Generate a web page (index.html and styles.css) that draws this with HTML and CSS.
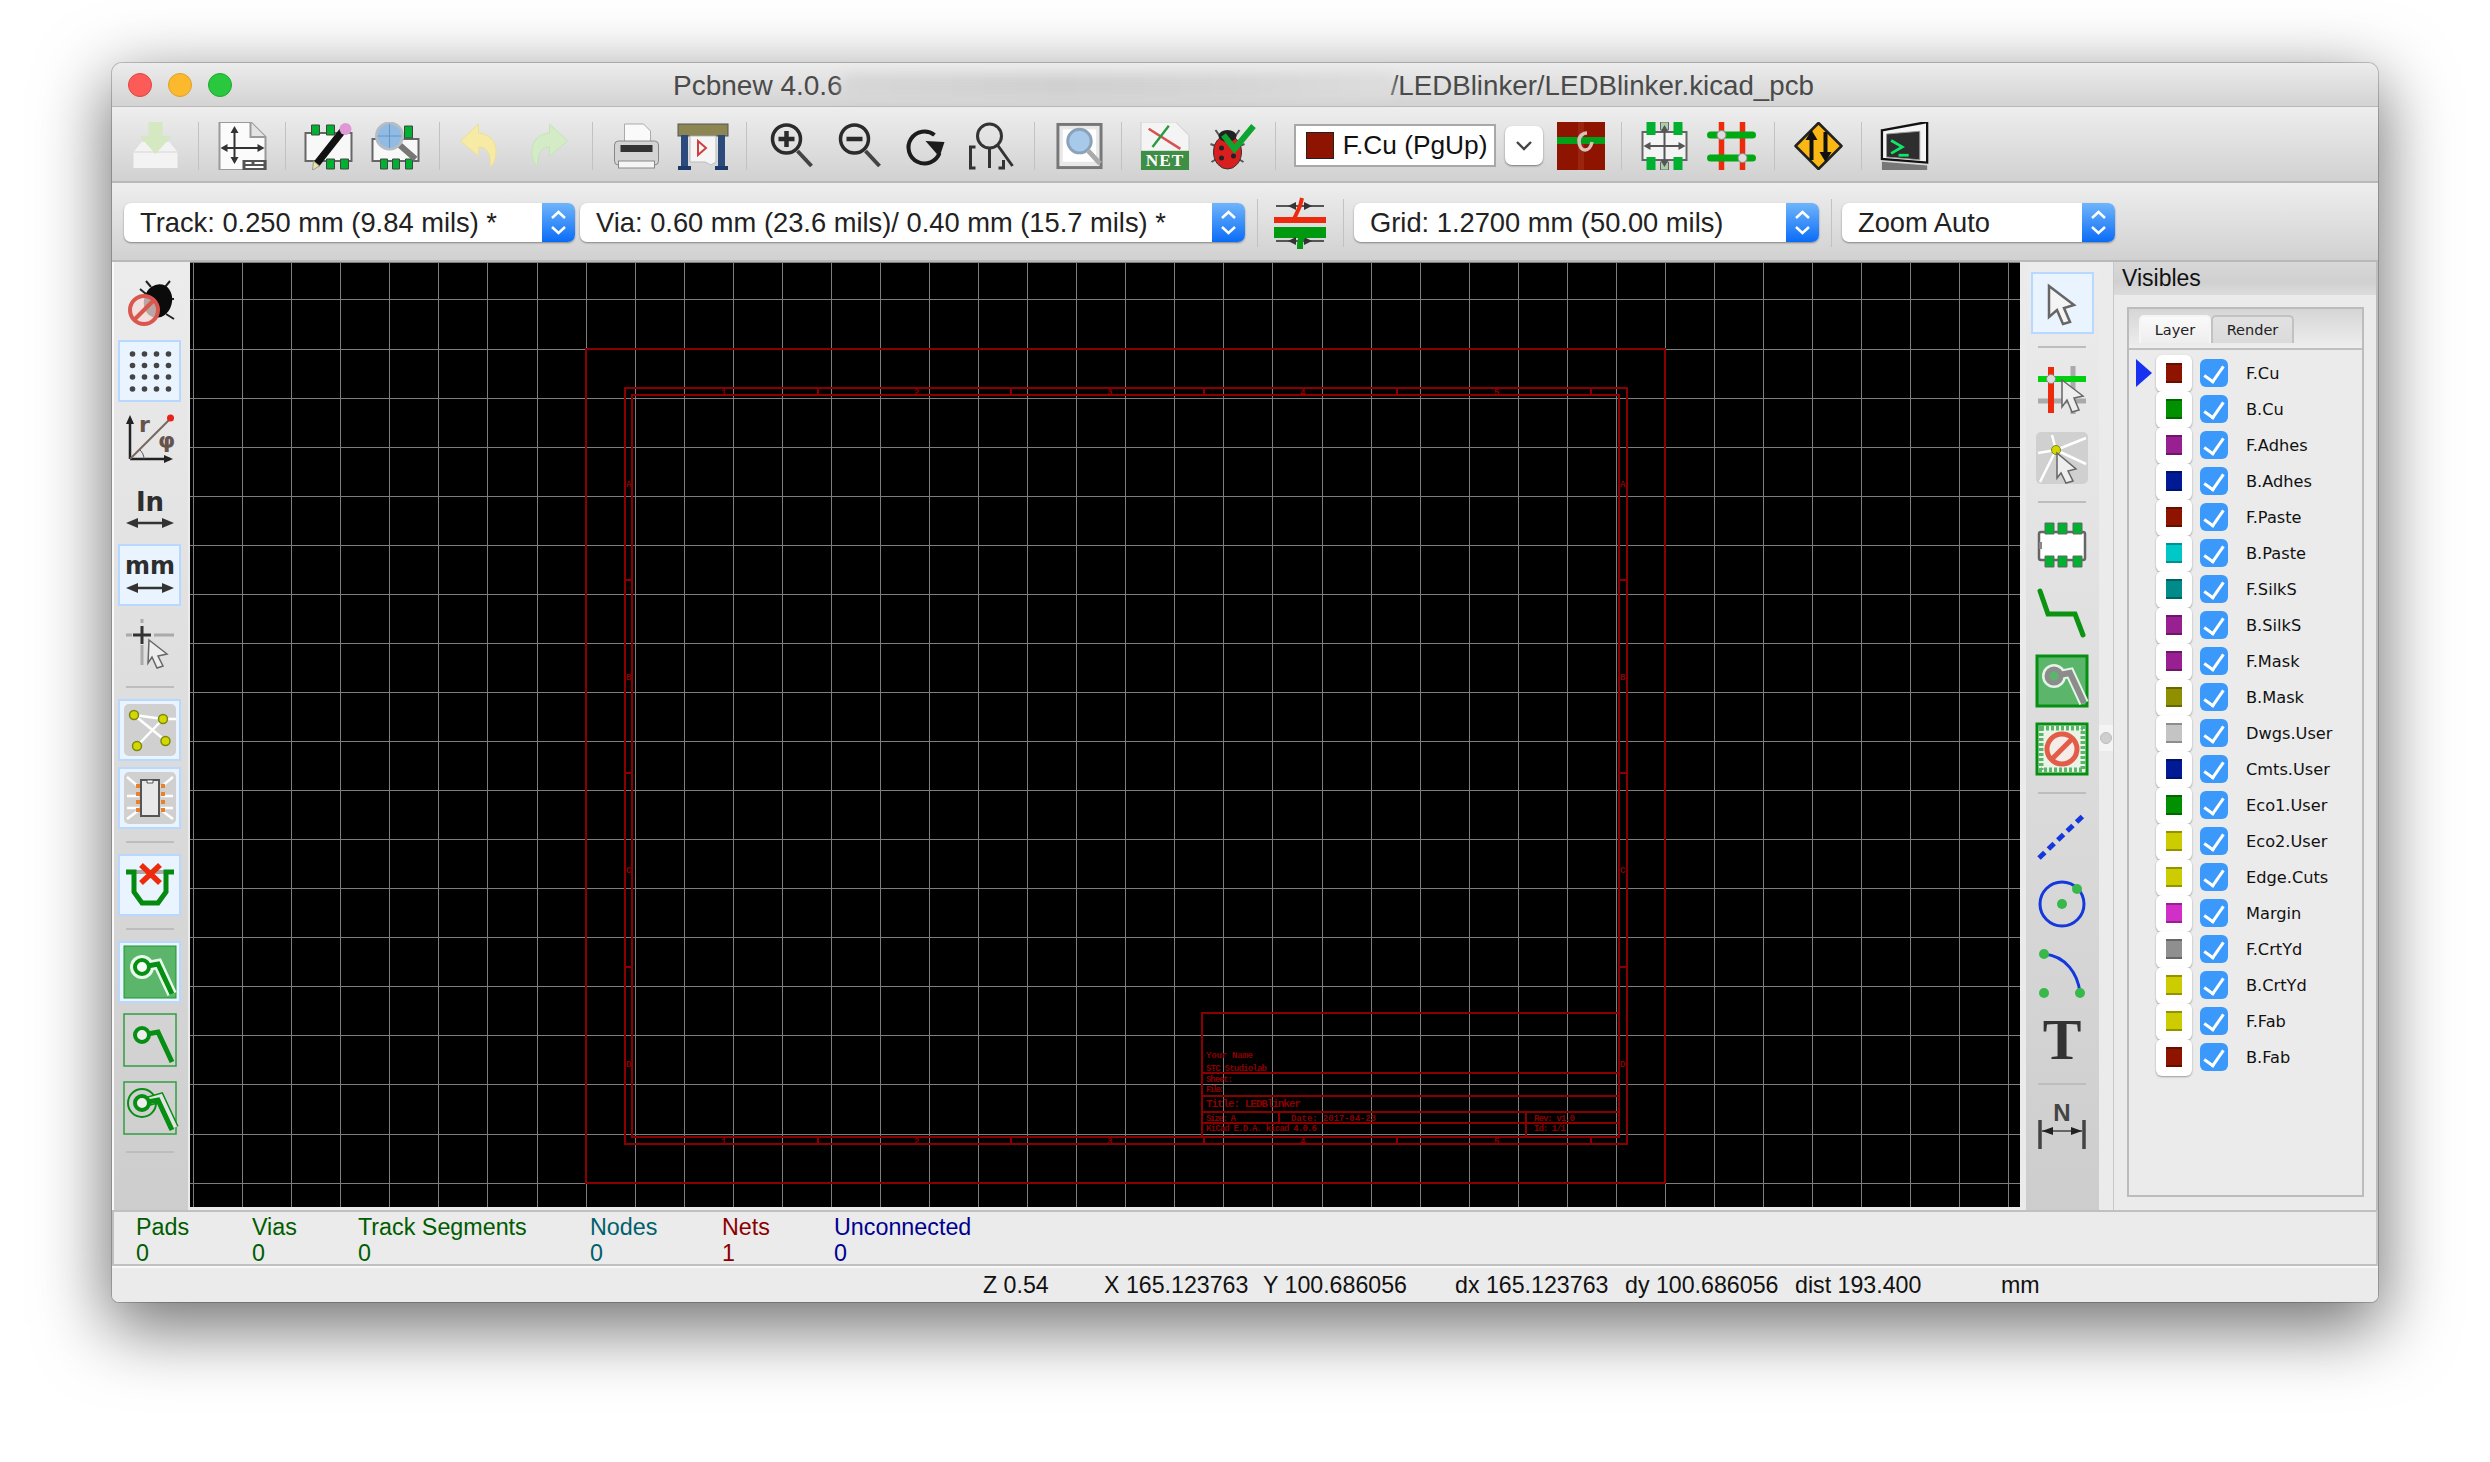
FILE: index.html
```html
<!DOCTYPE html>
<html lang="en">
<head>
<meta charset="utf-8">
<title>Pcbnew 4.0.6</title>
<link rel="stylesheet" href="styles.css">
</head>
<body>
<div class="window">
  <header class="titlebar">
    <div class="lights"><span class="light red"></span><span class="light amber"></span><span class="light green"></span></div>
    <div class="title"><span>Pcbnew 4.0.6</span><span class="redacted"></span><span class="path">/LEDBlinker/LEDBlinker.kicad_pcb</span></div>
  </header>

  <div class="toolbar top-tools">
    <svg class="tool" viewBox="0 0 48 48"><path d="M10 20 2 30v16h44V30l-8-10z" fill="#f3f3f3"/><path d="M2 30h44" stroke="#e4e4e4" stroke-width="2"/><path d="M17 0h14v14h9L24 32 8 14h9z" fill="#d4e8c2"/></svg>
    <i class="vsep"></i>
    <svg class="tool" viewBox="0 0 48 48"><path d="M1 0h31l15 15v33H1z" fill="#fbfbfb" stroke="#9a9a9a" stroke-width="2"/><path d="M32 0v15h15" fill="#e4e4e4" stroke="#9a9a9a" stroke-width="2"/><path d="M16 8v32M5 26h38" stroke="#333" stroke-width="2"/><path d="m16 4 4 7h-8zM16 42l4-7h-8zM2 26l7-4v8zM46 26l-7-4v8z" fill="#333"/><rect x="24" y="38" width="24" height="10" fill="#555"/><path d="M27 41h6M36 41h9M27 45h18" stroke="#fff" stroke-width="2"/></svg>
    <i class="vsep"></i>
    <svg class="tool" viewBox="0 0 48 48"><rect x="1" y="11" width="46" height="28" fill="#f8f8f8" stroke="#666" stroke-width="2"/><path d="M7 3h8v10H7zM22 3h8v10h-8zM22 37h8v10h-8zM36 37h8v10h-8z" fill="#00b030" stroke="#444"/><path d="M38 9 12 42" stroke="#111" stroke-width="7"/><circle cx="41" cy="7" r="6" fill="#e097d6"/><path d="m9 39 6 5-7 4z" fill="#eee29a" stroke="#999"/></svg>
    <svg class="tool" viewBox="0 0 48 48"><rect x="1" y="17" width="46" height="22" fill="#f8f8f8" stroke="#666" stroke-width="2"/><path d="M33 4h8v12h-8zM9 37h7v10H9zM21 37h7v10h-7zM34 37h7v10h-7z" fill="#00b030" stroke="#444"/><path d="m27 22 17 15" stroke="#777" stroke-width="6"/><circle cx="18" cy="14" r="13" fill="#8fbbe4" stroke="#b4bcc4" stroke-width="3"/><path d="M18 2v24M6 14h24" stroke="#6a94bd"/></svg>
    <i class="vsep"></i>
    <svg class="tool" viewBox="4 0 48 48"><path d="M24 2 6 19l18 15V25c10 0 12 8 12 20 8-8 10-32-12-34z" fill="#f6eaa4" stroke="#ece096"/></svg>
    <svg class="tool" viewBox="0 0 48 48"><path d="M24 2 42 19 24 34V25c-10 0-12 8-12 20-8-8-10-32 12-34z" fill="#d3ecc6" stroke="#c4e4b6"/></svg>
    <i class="vsep"></i>
    <svg class="tool" viewBox="0 0 48 48"><path d="M12 2h19l7 7v14H12z" fill="#fafafa" stroke="#aaa"/><rect x="2" y="19" width="44" height="24" rx="4" fill="#d4d4d4" stroke="#888"/><rect x="8" y="23" width="32" height="7" fill="#333"/><rect x="6" y="39" width="36" height="7" fill="#f5f5f5" stroke="#888"/></svg>
    <svg class="tool wide" viewBox="0 0 52 48"><rect x="1" y="2" width="50" height="12" fill="#8c8652" stroke="#555"/><rect x="4" y="13" width="7" height="33" fill="#2c4a7c"/><rect x="41" y="13" width="7" height="33" fill="#2c4a7c"/><rect x="1" y="44" width="13" height="4" fill="#1e3a6a"/><rect x="38" y="44" width="13" height="4" fill="#1e3a6a"/><path d="M13 14h26v26l-5 3-6-3H13z" fill="#f5f5f5" stroke="#bbb"/><path d="m21 19 8 7-8 7z" fill="none" stroke="#d04040" stroke-width="2"/></svg>
    <i class="vsep"></i>
    <svg class="tool" viewBox="-3 0 48 48"><circle cx="18" cy="17" r="14" fill="none" stroke="#2b2b2b" stroke-width="3.5"/><path d="M18 9v16M10 17h16" stroke="#2b2b2b" stroke-width="4.5"/><path d="m29 29 14 15" stroke="#444" stroke-width="4"/></svg>
    <svg class="tool" viewBox="-3 0 48 48"><circle cx="18" cy="17" r="14" fill="none" stroke="#2b2b2b" stroke-width="3.5"/><path d="M10 17h16" stroke="#2b2b2b" stroke-width="4.5"/><path d="m29 29 14 15" stroke="#444" stroke-width="4"/></svg>
    <svg class="tool" viewBox="0 0 48 48"><path d="M34 13a16 16 0 1 0 5 18" fill="none" stroke="#1c1c1c" stroke-width="4"/><path d="m25 19 19 1-5 15z" fill="#1c1c1c"/></svg>
    <svg class="tool" viewBox="0 0 48 48"><circle cx="22" cy="14" r="12" fill="none" stroke="#333" stroke-width="3"/><path d="m30 23 15 21M22 26v20" stroke="#333" stroke-width="3"/><path d="M8 25H3v21h5M31 46h5v-8" fill="none" stroke="#333" stroke-width="3"/></svg>
    <i class="vsep"></i>
    <svg class="tool" viewBox="-2 0 50 48"><rect x="2" y="2" width="44" height="44" fill="#e8e8e8" stroke="#777" stroke-width="3"/><rect x="7" y="7" width="34" height="33" fill="#fff"/><circle cx="24" cy="19" r="12" fill="#a7c9ea" stroke="#8ca2b8" stroke-width="3"/><path d="m33 29 12 13" stroke="#aaa" stroke-width="5"/></svg>
    <i class="vsep"></i>
    <svg class="tool wide" viewBox="0 0 52 50"><path d="M1 0h36l14 14v36H1z" fill="#f4f4f4" stroke="#ccc"/><path d="m9 7 33 21" stroke="#d85050" stroke-width="2.5"/><path d="m30 4-17 22" stroke="#2a9a40" stroke-width="2.5"/><rect x="1" y="30" width="50" height="20" fill="#3f8e46"/><text class="net-text" x="26" y="46" text-anchor="middle">NET</text></svg>
    <svg class="tool" viewBox="0 0 48 48"><path d="M8 8 15 18M32 8l-7 10M3 22l10 4M4 40l10-6M37 22l-10 4M36 40l-10-6" stroke="#555" stroke-width="2"/><ellipse cx="20" cy="30" rx="14" ry="17" fill="#d81e1e" stroke="#333"/><ellipse cx="20" cy="14" rx="9" ry="6" fill="#222"/><circle cx="14" cy="26" r="2.5" fill="#222"/><circle cx="26" cy="34" r="2.5" fill="#222"/><circle cx="14" cy="36" r="2.5" fill="#222"/><path d="M16 13 27 27 46 4" fill="none" stroke="#0da52f" stroke-width="6"/></svg>
    <i class="vsep"></i>
    <div class="layer-select"><i class="layer-chip"></i><span>F.Cu (PgUp)</span></div>
    <div class="layer-arrow"><svg width="18" height="12" viewBox="0 0 18 12"><path d="m2 2 7 7 7-7" fill="none" stroke="#444" stroke-width="2.4"/></svg></div>
    <svg class="tool via-icon" viewBox="0 0 48 48"><rect width="48" height="48" fill="#8f1400"/><rect x="21" width="6" height="48" fill="#9a2410"/><rect y="15" width="48" height="7" fill="#00a018"/><path d="M30 11c-3 0-8 2-8 8s3 9 6 9 6-3 7-8" fill="none" stroke="#d8c0bc" stroke-width="3.5"/></svg>
    <i class="vsep"></i>
    <svg class="tool" viewBox="0 0 48 48"><path d="M2 10h44v28H2z" fill="#f4f4f4" stroke="#666" stroke-width="2"/><path d="M6 0h9v13H6zM33 0h9v13h-9zM6 35h9v13H6zM33 35h9v13h-9z" fill="#00b030"/><path d="M20 0h8v8h-8zM20 40h8v8h-8z" fill="#a8cda8" stroke="#666"/><path d="M5 24h38M24 5v38" stroke="#555" stroke-width="2"/><path d="m3 24 7-4v8zM45 24l-7-4v8zM24 3l-4 7h8zM24 45l-4-7h8z" fill="#555"/></svg>
    <svg class="tool" viewBox="0 0 48 48"><path d="M14 0v48M35 0v48" stroke="#ee2a0c" stroke-width="5.5"/><path d="M3 13h42M3 36h42" stroke="#00a814" stroke-width="7" stroke-linecap="round"/><circle cx="14" cy="13" r="4.500" fill="#ddd" stroke="#888"/><circle cx="35" cy="36" r="4.500" fill="#ddd" stroke="#888"/></svg>
    <i class="vsep"></i>
    <svg class="tool" viewBox="0 0 48 48"><path d="m24 1 23 23-23 23L1 24z" fill="#fbb714" stroke="#222" stroke-width="2.5" stroke-linejoin="round"/><path d="M17 38V16M31 10v22" stroke="#111" stroke-width="4"/><path d="m17 8 6 10H11zM31 40l6-10H25z" fill="#111"/></svg>
    <i class="vsep"></i>
    <svg class="tool wide" viewBox="0 0 52 52"><path d="M1 9 50 0v44L1 40z" fill="#f4f4f4" stroke="#111" stroke-width="2.5"/><path d="M6 13 42 10v31L6 38z" fill="#2e2e2e" stroke="#999"/><path d="m11 20 12 7-12 7" fill="none" stroke="#0ee66a" stroke-width="3"/><path d="M19 36h11" stroke="#0ee66a" stroke-width="3"/><path d="M1 43 50 47v5H1z" fill="#777"/></svg>
  </div>

  <div class="toolbar select-tools">
    <div class="combo track"><span>Track: 0.250 mm (9.84 mils) *</span><svg class="stepper" viewBox="0 0 33 39"><path d="m10 15 6.500-6 6.500 6M10 24l6.500 6 6.500-6" fill="none" stroke="#fff" stroke-width="2.500"/></svg></div>
    <div class="combo via"><span>Via: 0.60 mm (23.6 mils)/ 0.40 mm (15.7 mils) *</span><svg class="stepper" viewBox="0 0 33 39"><path d="m10 15 6.500-6 6.500 6M10 24l6.500 6 6.500-6" fill="none" stroke="#fff" stroke-width="2.500"/></svg></div>
    <i class="vsep tall"></i>
    <svg class="auto-width" viewBox="0 0 52 52"><path d="M2 9h48M2 44h48" fill="none" stroke="#555" stroke-width="2"/><path d="m14 9 8-4v8zM38 9l-8-4v8z" fill="#333"/><path d="M28 1 26 9 20 22" fill="none" stroke="#ee2a0c" stroke-width="4"/><rect y="20" width="52" height="6" fill="#ee2a0c"/><rect y="30" width="52" height="11" fill="#009a10"/><path d="m14 44 8-4v8zM38 44l-8-4v8z" fill="#333"/><path d="M32 37c-6 3-6 7-6 15" fill="none" stroke="#009a10" stroke-width="6"/></svg>
    <i class="vsep tall after-icon"></i>
    <div class="combo grid"><span>Grid: 1.2700 mm (50.00 mils)</span><svg class="stepper" viewBox="0 0 33 39"><path d="m10 15 6.500-6 6.500 6M10 24l6.500 6 6.500-6" fill="none" stroke="#fff" stroke-width="2.500"/></svg></div>
    <i class="vsep tall"></i>
    <div class="combo zoom"><span>Zoom Auto</span><svg class="stepper" viewBox="0 0 33 39"><path d="m10 15 6.500-6 6.500 6M10 24l6.500 6 6.500-6" fill="none" stroke="#fff" stroke-width="2.500"/></svg></div>
  </div>

  <div class="workspace">
    <aside class="vbar left-bar">
      <div class="vtool"><svg viewBox="0 0 48 48"><path d="M20 2l5 6M44 2l-5 6M48 20h-6M48 40l-8-5M14 10l6 5" stroke="#222" stroke-width="2"/><ellipse cx="32" cy="22" rx="14" ry="17" fill="#0b0b0b" transform="rotate(15 32 22)"/><circle cx="18" cy="31" r="14" fill="#f3dcd8" fill-opacity=".75" stroke="#d9574e" stroke-width="4"/><path d="m9 40 18-18" stroke="#d9574e" stroke-width="4"/></svg></div>
      <div class="vtool on"><svg viewBox="0 0 48 48"><g fill="#444"><circle cx="6.500" cy="7" r="2.800"/><circle cx="18.500" cy="7" r="2.800"/><circle cx="30.500" cy="7" r="2.800"/><circle cx="42.500" cy="7" r="2.800"/><circle cx="6.500" cy="18.500" r="2.800"/><circle cx="18.500" cy="18.500" r="2.800"/><circle cx="30.500" cy="18.500" r="2.800"/><circle cx="42.500" cy="18.500" r="2.800"/><circle cx="6.500" cy="30" r="2.800"/><circle cx="18.500" cy="30" r="2.800"/><circle cx="30.500" cy="30" r="2.800"/><circle cx="42.500" cy="30" r="2.800"/><circle cx="6.500" cy="42" r="2.800"/><circle cx="18.500" cy="42" r="2.800"/><circle cx="30.500" cy="42" r="2.800"/><circle cx="42.500" cy="42" r="2.800"/></g></svg></div>
      <div class="vtool"><svg viewBox="0 0 48 48"><path d="M4 44V4M4 44h40" fill="none" stroke="#222" stroke-width="2.500"/><path d="m4 0 4 9H0zM47 44l-9-4v8z" fill="#222"/><path d="M4 44 44 4" stroke="#7a6660" stroke-width="2"/><circle cx="44.500" cy="3" r="3.500" fill="#e8221a"/><text class="polar-r" x="13" y="17">r</text><text class="polar-phi" x="32" y="33">φ</text><path d="M18 44c0-4-2-7-4-9" fill="none" stroke="#555"/></svg></div>
      <div class="vtool"><svg viewBox="0 0 48 48"><text class="unit-in" x="24" y="28" text-anchor="middle">In</text><path d="M6 40h36" stroke="#333" stroke-width="2.500"/><path d="m0 40 12-5v10zM48 40l-12-5v10z" fill="#333"/></svg></div>
      <div class="vtool on"><svg viewBox="0 0 48 48"><text class="unit-mm" x="24" y="23" text-anchor="middle">mm</text><path d="M6 37h36" stroke="#333" stroke-width="2.500"/><path d="m0 37 12-5v10zM48 37l-12-5v10z" fill="#333"/></svg></div>
      <div class="vtool"><svg viewBox="0 0 48 48"><path d="M0 16h6M28 16h20M16 0v4M16 26v20" stroke="#aaa" stroke-width="3"/><path d="M16 7v18M7 16h18" stroke="#333" stroke-width="3"/><path d="m23 21 18 14-9 2 5 10-6 2-5-11-4 6z" fill="#eee" stroke="#666" stroke-width="1.500"/></svg></div>
      <i class="hsep"></i>
      <div class="vtool on"><svg viewBox="0 0 48 48"><rect x="-2" y="-2" width="52" height="52" rx="5" fill="#d0d0d0"/><path d="m8 9 32 26M37 13 11 40M8 9l29 4M37 13h13" stroke="#fff" stroke-width="2.500"/><g fill="#d6d600" stroke="#7a8a10" stroke-width="1.500"><circle cx="8" cy="9" r="4.500"/><circle cx="37" cy="13" r="4.500"/><circle cx="11" cy="40" r="4.500"/><circle cx="39.500" cy="35" r="4.500"/></g></svg></div>
      <div class="vtool on"><svg viewBox="0 0 48 48"><rect x="-2" y="-2" width="52" height="52" rx="5" fill="#d0d0d0"/><path d="M1 3l12 10M47 3 35 13M1 22h12M47 22H35M1 34h12M47 34H35M1 45l12-9M47 45l-12-9" stroke="#fff" stroke-width="2.500"/><rect x="15" y="6" width="18" height="36" fill="#e8e8e8" stroke="#555" stroke-width="2"/><path d="M21 6h6v3h-6z" fill="#fff" stroke="#555"/><g fill="#e8822a"><rect x="10" y="10" width="4" height="4"/><rect x="10" y="18" width="4" height="4"/><rect x="10" y="26" width="4" height="4"/><rect x="10" y="34" width="4" height="4"/><rect x="35" y="10" width="4" height="4"/><rect x="35" y="18" width="4" height="4"/><rect x="35" y="26" width="4" height="4"/><rect x="35" y="34" width="4" height="4"/></g></svg></div>
      <i class="hsep"></i>
      <div class="vtool on"><svg viewBox="0 0 48 48"><path d="M2 11h44" stroke="#aaa" stroke-width="4"/><path d="M0 11h8v20l8 11h16l8-11V11h8" fill="none" stroke="#058a10" stroke-width="5"/><path d="m15 4 19 18M34 4 15 22" stroke="#ee2a0c" stroke-width="5.500"/></svg></div>
      <i class="hsep"></i>
      <div class="vtool on"><svg viewBox="0 0 48 48"><rect x="-2" y="-2" width="52" height="52" fill="#5bb56b" stroke="#1a9a2a" stroke-width="1"/><path d="M16 19 32 16l14 30" fill="none" stroke="#e8f8ea" stroke-width="10"/><circle cx="16" cy="19" r="12" fill="#e8f8ea"/><path d="M16 19 32 16l14 30" fill="none" stroke="#068f12" stroke-width="5"/><circle cx="16" cy="19" r="7" fill="#f6fbf6" stroke="#068f12" stroke-width="4"/></svg></div>
      <div class="vtool"><svg viewBox="0 0 48 48"><rect x="-2" y="-2" width="52" height="52" fill="none" stroke="#2f9f40" stroke-width="1.500"/><path d="M16 19 32 16l14 30" fill="none" stroke="#068f12" stroke-width="5"/><circle cx="16" cy="19" r="7" fill="#eee" stroke="#068f12" stroke-width="4"/></svg></div>
      <div class="vtool"><svg viewBox="0 0 48 48"><rect x="-2" y="-2" width="52" height="52" fill="none" stroke="#2f9f40" stroke-width="1.500"/><path d="M16 19 34 14l14 30" fill="none" stroke="#068f12" stroke-width="10"/><circle cx="16" cy="19" r="14" fill="none" stroke="#068f12" stroke-width="2"/><path d="M16 19 34 14l14 30" fill="none" stroke="#e4e4e4" stroke-width="7"/><path d="M16 19 32 16l14 30" fill="none" stroke="#068f12" stroke-width="5"/><circle cx="16" cy="19" r="7" fill="#eee" stroke="#068f12" stroke-width="4"/></svg></div>
      <i class="hsep"></i>
    </aside>

    <main class="canvas">
      <svg class="board" viewBox="0 0 1830 945" width="1830" height="945">
        <rect width="1830" height="945" fill="#000"/>
        <path class="grid-lines" d="M3.500 0V945M52.500 0V945M101.500 0V945M150.500 0V945M199.500 0V945M248.500 0V945M297.500 0V945M347.500 0V945M396.500 0V945M445.500 0V945M494.500 0V945M543.500 0V945M592.500 0V945M641.500 0V945M690.500 0V945M739.500 0V945M788.500 0V945M837.500 0V945M886.500 0V945M935.500 0V945M984.500 0V945M1033.500 0V945M1082.500 0V945M1132.500 0V945M1181.500 0V945M1230.500 0V945M1279.500 0V945M1328.500 0V945M1377.500 0V945M1426.500 0V945M1475.500 0V945M1524.500 0V945M1573.500 0V945M1622.500 0V945M1671.500 0V945M1720.500 0V945M1769.500 0V945M1818.500 0V945M0 .500H1830M0 37.500H1830M0 87.500H1830M0 136.500H1830M0 185.500H1830M0 234.500H1830M0 283.500H1830M0 332.500H1830M0 381.500H1830M0 430.500H1830M0 479.500H1830M0 528.500H1830M0 577.500H1830M0 626.500H1830M0 675.500H1830M0 724.500H1830M0 773.500H1830M0 822.500H1830M0 872.500H1830M0 921.500H1830"/>
        <g class="frame">
          <rect x="396" y="87" width="1079" height="834"/>
          <rect x="435" y="126" width="1002" height="756"/>
          <rect x="442" y="133" width="987" height="742"/>
          <path d="M1012 875V751H1429M1012 811H1429M1012 834H1429M1012 850H1429M1012 861H1429M1089 850V861M1336 850V875"/>
          <path d="M628 126v7M821 126v7M1014 126v7M1207 126v7M1401 126v7M628 875v7M821 875v7M1014 875v7M1207 875v7M1401 875v7M435 318h7M435 511h7M435 705h7M1429 318h8M1429 511h8M1429 705h8"/>
        </g>
        <g class="sheet-text">
          <text x="531" y="133">1</text><text x="724" y="133">2</text><text x="917" y="133">3</text><text x="1110" y="133">4</text><text x="1304" y="133">5</text>
          <text x="531" y="882">1</text><text x="724" y="882">2</text><text x="917" y="882">3</text><text x="1110" y="882">4</text><text x="1304" y="882">5</text>
          <text x="436" y="225">A</text><text x="436" y="418">B</text><text x="436" y="611">C</text><text x="436" y="805">D</text>
          <text x="1430" y="225">A</text><text x="1430" y="418">B</text><text x="1430" y="611">C</text><text x="1430" y="805">D</text>
          <text x="1016" y="796" textLength="47">Your Name</text>
          <text x="1016" y="809" textLength="61">STC Studiolab</text>
          <text x="1016" y="820" textLength="27">Sheet:</text>
          <text x="1016" y="830" textLength="18">File:</text>
          <text class="sheet-title" x="1016" y="845" textLength="95">Title: LEDBlinker</text>
          <text x="1016" y="859" textLength="30">Size: A</text>
          <text x="1101" y="859" textLength="85">Date: 2017-04-23</text>
          <text x="1344" y="859" textLength="41">Rev: v1.0</text>
          <text x="1016" y="869" textLength="111">KiCad E.D.A. kicad 4.0.6</text>
          <text x="1344" y="869" textLength="32">Id: 1/1</text>
        </g>
      </svg>
    </main>

    <aside class="vbar right-bar">
      <div class="vtool on"><svg viewBox="0 0 48 48"><path d="m11 7 25 19-10 3 6 14-7 2-6-14-8 7z" fill="#f4f4f4" stroke="#666" stroke-width="2.500"/></svg></div>
      <i class="hsep"></i>
      <div class="vtool"><svg viewBox="0 0 48 48"><path d="M35 0v48M0 35h48" stroke="#aaa" stroke-width="5"/><path d="M13 1v46" stroke="#ee2a0c" stroke-width="6"/><path d="M0 13h48" stroke="#00d010" stroke-width="6"/><circle cx="13" cy="13" r="4.500" fill="#ddd" stroke="#888"/><path d="m24 14 21 16-9 2 5 12-7 2-5-12-5 7z" fill="#eee" stroke="#666" stroke-width="1.500"/></svg></div>
      <div class="vtool"><svg viewBox="0 0 48 48"><rect x="-2" y="-2" width="52" height="52" rx="5" fill="#d0d0d0"/><path d="M18 16 14 1M18 16 48 4M18 16 0 19M18 16 2 48M18 16l30 14" stroke="#fff" stroke-width="2.500"/><circle cx="18" cy="16" r="4.500" fill="#d6d600" stroke="#7a8a10"/><path d="m19 19 19 16-8 2 5 10-7 2-5-10-4 5z" fill="#eee" stroke="#666" stroke-width="1.500"/></svg></div>
      <i class="hsep"></i>
      <div class="vtool"><svg viewBox="0 0 48 48"><rect x="1" y="11" width="46" height="28" rx="2" fill="#fff" stroke="#666" stroke-width="2.500"/><path d="M7 2h9v11H7zM20 2h9v11h-9zM35 2h9v11h-9zM7 35h9v11H7zM20 35h9v11h-9zM35 35h9v11h-9z" fill="#00b030" stroke="#666"/><path d="M1 21h3v7H1z" fill="#888"/></svg></div>
      <div class="vtool"><svg viewBox="0 0 48 48"><path d="m2 2 8 23h27l8 21" fill="none" stroke="#0a9410" stroke-width="5" stroke-linecap="round"/></svg></div>
      <div class="vtool"><svg viewBox="0 0 48 48"><rect x="-1" y="-1" width="50" height="50" fill="#5bb56b" stroke="#068f12" stroke-width="3"/><path d="M16 19 32 16l14 30" fill="none" stroke="#e4f4e6" stroke-width="10"/><circle cx="16" cy="19" r="12" fill="#e4f4e6"/><path d="M16 19 32 16l14 30" fill="none" stroke="#8c8c8c" stroke-width="6"/><circle cx="16" cy="19" r="7" fill="#5bb56b" stroke="#8c8c8c" stroke-width="5"/></svg></div>
      <div class="vtool"><svg viewBox="0 0 48 48"><rect x="-1" y="-1" width="50" height="50" fill="#eaf4e6" stroke="#068f12" stroke-width="3"/><rect x="3" y="3" width="42" height="42" fill="none" stroke="#5bb56b" stroke-width="5" stroke-dasharray="3 2"/><circle cx="24" cy="24" r="15" fill="#f5ece8" stroke="#e25c48" stroke-width="5"/><path d="m13 35 22-22" stroke="#e25c48" stroke-width="5"/></svg></div>
      <i class="hsep"></i>
      <div class="vtool"><svg viewBox="0 0 48 48"><path d="M1 46 47 2" stroke="#1438dc" stroke-width="5" stroke-dasharray="8 5"/></svg></div>
      <div class="vtool"><svg viewBox="0 0 48 48"><circle cx="24" cy="24" r="22" fill="none" stroke="#1438dc" stroke-width="3"/><circle cx="24" cy="24" r="5" fill="#38b84a"/><circle cx="39" cy="9" r="5" fill="#38b84a"/></svg></div>
      <div class="vtool"><svg viewBox="0 0 48 48"><path d="M6 6c22 2 34 20 36 39" fill="none" stroke="#1438dc" stroke-width="3"/><circle cx="6" cy="6" r="5" fill="#38b84a"/><circle cx="6" cy="45" r="5" fill="#38b84a"/><circle cx="42" cy="45" r="5" fill="#38b84a"/></svg></div>
      <div class="vtool"><svg viewBox="0 0 48 48"><text class="tool-t" x="24" y="43" text-anchor="middle">T</text></svg></div>
      <i class="hsep"></i>
      <div class="vtool"><svg viewBox="0 0 48 48"><text class="tool-n" x="24" y="18" text-anchor="middle">N</text><path d="M2 17v29M46 17v29" stroke="#444" stroke-width="3.500"/><path d="M4 28h40" stroke="#444" stroke-width="1.500"/><path d="m4 28 11-4v8zM44 28l-11-4v8z" fill="#222"/></svg></div>
    </aside>

    <div class="sash"><span class="sash-grip"><i></i></span></div>

    <aside class="visibles">
      <h2 class="caption">Visibles</h2>
      <div class="notebook">
        <div class="tabs"><span class="tab active">Layer</span><span class="tab">Render</span></div>
        <div class="layers">
          <div class="row current"><span class="swatch"><i class="c-red"></i></span><span class="check"></span><span class="name">F.Cu</span></div>
          <div class="row"><span class="swatch"><i class="c-green"></i></span><span class="check"></span><span class="name">B.Cu</span></div>
          <div class="row"><span class="swatch"><i class="c-purple"></i></span><span class="check"></span><span class="name">F.Adhes</span></div>
          <div class="row"><span class="swatch"><i class="c-navy"></i></span><span class="check"></span><span class="name">B.Adhes</span></div>
          <div class="row"><span class="swatch"><i class="c-red"></i></span><span class="check"></span><span class="name">F.Paste</span></div>
          <div class="row"><span class="swatch"><i class="c-cyan"></i></span><span class="check"></span><span class="name">B.Paste</span></div>
          <div class="row"><span class="swatch"><i class="c-teal"></i></span><span class="check"></span><span class="name">F.SilkS</span></div>
          <div class="row"><span class="swatch"><i class="c-purple"></i></span><span class="check"></span><span class="name">B.SilkS</span></div>
          <div class="row"><span class="swatch"><i class="c-purple"></i></span><span class="check"></span><span class="name">F.Mask</span></div>
          <div class="row"><span class="swatch"><i class="c-olive"></i></span><span class="check"></span><span class="name">B.Mask</span></div>
          <div class="row"><span class="swatch"><i class="c-silver"></i></span><span class="check"></span><span class="name">Dwgs.User</span></div>
          <div class="row"><span class="swatch"><i class="c-navy"></i></span><span class="check"></span><span class="name">Cmts.User</span></div>
          <div class="row"><span class="swatch"><i class="c-green"></i></span><span class="check"></span><span class="name">Eco1.User</span></div>
          <div class="row"><span class="swatch"><i class="c-yellow"></i></span><span class="check"></span><span class="name">Eco2.User</span></div>
          <div class="row"><span class="swatch"><i class="c-yellow"></i></span><span class="check"></span><span class="name">Edge.Cuts</span></div>
          <div class="row"><span class="swatch"><i class="c-magenta"></i></span><span class="check"></span><span class="name">Margin</span></div>
          <div class="row"><span class="swatch"><i class="c-gray"></i></span><span class="check"></span><span class="name">F.CrtYd</span></div>
          <div class="row"><span class="swatch"><i class="c-yellow"></i></span><span class="check"></span><span class="name">B.CrtYd</span></div>
          <div class="row"><span class="swatch"><i class="c-yellow"></i></span><span class="check"></span><span class="name">F.Fab</span></div>
          <div class="row"><span class="swatch"><i class="c-red"></i></span><span class="check"></span><span class="name">B.Fab</span></div>
        </div>
      </div>
    </aside>
  </div>

  <section class="info">
    <div class="info-item t-green"><span>Pads</span><span>0</span></div>
    <div class="info-item t-green"><span>Vias</span><span>0</span></div>
    <div class="info-item t-green"><span>Track Segments</span><span>0</span></div>
    <div class="info-item t-teal"><span>Nodes</span><span>0</span></div>
    <div class="info-item t-red"><span>Nets</span><span>1</span></div>
    <div class="info-item t-blue"><span>Unconnected</span><span>0</span></div>
  </section>

  <footer class="status">
    <span>Z 0.54</span><span>X 165.123763</span><span>Y 100.686056</span><span>dx 165.123763</span><span>dy 100.686056</span><span>dist 193.400</span><span>mm</span>
  </footer>
</div>
</body>
</html>
```
FILE: styles.css
```css
* { box-sizing: border-box; }
html, body { margin: 0; padding: 0; background: #fff; }
body { width: 2490px; height: 1462px; overflow: hidden; font-family: "Liberation Sans", Arial, sans-serif; }

.window {
  width: 2266px;
  height: 1239px;
  margin: 63px 0 0 112px;
  display: flex;
  flex-direction: column;
  border-radius: 10px 10px 7px 7px;
  background: #ebebeb;
  box-shadow: 0 22px 70px 4px rgba(0, 0, 0, .56), 0 0 0 1px rgba(0, 0, 0, .2);
}

/* title bar */
.titlebar {
  height: 44px;
  flex: none;
  display: flex;
  align-items: center;
  padding-left: 16px;
  background: linear-gradient(#ececec, #d3d3d3);
  border-radius: 10px 10px 0 0;
  border-bottom: 1px solid #b8b8b8;
}
.lights { display: flex; gap: 16px; }
.light { width: 24px; height: 24px; border-radius: 50%; }
.light.red { background: #fc5b57; border: 1px solid #e0443e; }
.light.amber { background: #fdb92e; border: 1px solid #dea123; }
.light.green { background: #29c83f; border: 1px solid #1aab29; }
.title { display: flex; align-items: center; margin: 2px 0 0 441px; font-size: 28px; color: #4a4a4a; white-space: nowrap; }
.title .path { font-size: 27.7px; }
.redacted { width: 548px; height: 22px; background: linear-gradient(90deg, #d6d6d6, #cfcfcf 40%, #d4d4d4 70%, #dcdcdc); filter: blur(6px); }

/* toolbars */
.toolbar {
  height: 76px;
  flex: none;
  display: flex;
  align-items: center;
  background: linear-gradient(#eeeeee, #d1d1d1);
  border-bottom: 2px solid #b9b9b9;
}
.top-tools { gap: 18.25px; padding: 3px 0 0 19px; }
.tool { width: 49px; height: 48px; flex: none; }
.tool.wide { width: 52px; margin-inline: -1.5px; }
.vsep { width: 1px; height: 48px; flex: none; background: #c2c2c2; }
.vsep.tall { margin-inline: 12px 16px; }
.vsep.tall.after-icon { margin-inline: 17px 15px; }
.layer-select {
  width: 202px;
  height: 43px;
  flex: none;
  display: flex;
  align-items: center;
  gap: 9px;
  padding-left: 10px;
  background: #fff;
  border: 2px solid #a8a8a8;
  font-size: 26.3px;
  color: #111;
  white-space: nowrap;
}
.layer-chip { width: 28px; height: 27px; flex: none; background: #8f1400; border: 1px solid #222; }
.layer-arrow {
  width: 38px;
  height: 39px;
  flex: none;
  margin-left: -9px;
  display: flex;
  align-items: center;
  justify-content: center;
  background: #fff;
  border-radius: 7px;
  box-shadow: 0 1px 2px rgba(0, 0, 0, .45);
}
.via-icon { margin: 0 -3px 0 -4px; width: 48px; }

.select-tools { padding: 2px 0 0 12px; height: 79px; gap: 0; }
.combo {
  height: 39px;
  flex: none;
  display: flex;
  align-items: center;
  justify-content: space-between;
  padding-left: 16px;
  background: #fff;
  border-radius: 7px;
  box-shadow: 0 1px 2px rgba(0, 0, 0, .4);
  font-size: 27.3px;
  color: #222;
  white-space: nowrap;
  overflow: hidden;
}
.combo.track { width: 451px; margin-right: 5px; }
.combo.via { width: 665px; }
.combo.grid { width: 465px; margin-left: -5px; }
.combo.zoom { width: 273px; margin-left: -6px; }
.stepper { width: 33px; height: 39px; flex: none; background: linear-gradient(#70b5fb, #0a6cf7); }
.auto-width { width: 52px; height: 52px; flex: none; }

/* workspace */
.workspace { height: 948px; flex: none; display: flex; background: #ebebeb; }
.vbar {
  flex: none;
  display: flex;
  flex-direction: column;
  align-items: center;
  gap: 6px;
  padding-top: 10px;
  background: linear-gradient(#ececec, #cdcdcd);
}
.left-bar { width: 76px; border-left: 2px solid #fafafa; margin-right: 2px; padding-right: 3px; }
.right-bar { width: 73px; margin-left: 6px; padding-right: 1px; }
.vtool {
  width: 63px;
  height: 62px;
  flex: none;
  display: flex;
  align-items: center;
  justify-content: center;
  border: 2px solid transparent;
}
.vtool svg { width: 48px; height: 48px; overflow: visible; }
.vtool.on { background: #eaf4ff; border-color: #b8d8ff; }
.hsep { width: 48px; height: 2px; flex: none; margin-block: 5.5px; background: #bdbdbd; }

.canvas { width: 1830px; height: 945px; flex: none; line-height: 0; }
.board { display: block; }
.grid-lines { stroke: #7e7e7e; stroke-width: 1; fill: none; shape-rendering: crispEdges; }
.frame rect, .frame path { fill: none; stroke: #8a0000; stroke-width: 2; }
.sheet-text text { fill: #8a0000; font-family: "Liberation Mono", monospace; font-size: 9px; font-weight: 700; }
.sheet-text .sheet-title { font-size: 11px; }

/* icon text */
.net-text { fill: #fff; font-family: "Liberation Serif", serif; font-weight: 700; font-size: 18px; letter-spacing: 1px; }
.polar-r { fill: #66534d; font-family: "DejaVu Sans", sans-serif; font-size: 22px; font-weight: 700; }
.polar-phi { fill: #66534d; font-family: "DejaVu Sans", sans-serif; font-size: 22px; font-weight: 700; }
.unit-in { fill: #2e2e2e; font-family: "DejaVu Sans", sans-serif; font-size: 26px; font-weight: 700; }
.unit-mm { fill: #2e2e2e; font-family: "DejaVu Sans", sans-serif; font-size: 24px; font-weight: 700; }
.tool-t { fill: #333; font-family: "Liberation Serif", serif; font-size: 58px; font-weight: 700; }
.tool-n { fill: #444; font-family: "Liberation Sans", sans-serif; font-size: 24px; font-weight: 700; }

/* sash */
.sash { width: 15px; flex: none; display: flex; flex-direction: column; padding-top: 463px; background: #ebebeb; border-right: 1px solid #c8c8c8; }
.sash-grip { width: 14px; height: 26px; display: flex; align-items: center; justify-content: center; background: #f4f4f4; }
.sash-grip i { width: 12px; height: 12px; border-radius: 50%; background: #cfcfcf; border: 1px solid #bdbdbd; }

/* visibles */
.visibles { flex: 1; min-width: 0; display: flex; flex-direction: column; border-right: 2px solid #bdbdbd; }
.caption {
  margin: 0;
  height: 33px;
  flex: none;
  padding-left: 8px;
  display: flex;
  align-items: center;
  background: linear-gradient(#d8d8d8, #d0d0d0 60%, #dcdcdc);
  font-size: 23px;
  font-weight: 400;
  color: #111;
}
.notebook { flex: 1; margin: 12px 12px 13px 13px; display: flex; flex-direction: column; border: 2px solid #bcbcbc; min-height: 0; }
.tabs { height: 41px; flex: none; display: flex; align-items: flex-end; padding-left: 10px; background: linear-gradient(#d6d6d6, #eeeeee); border-bottom: 2px solid #c0c0c0; }
.tab {
  height: 28px;
  width: 83px;
  display: flex;
  align-items: center;
  justify-content: center;
  margin-bottom: 5px;
  border: 2px solid #c2c2c2;
  border-bottom: 0;
  border-radius: 5px 5px 0 0;
  background: linear-gradient(#e2e2e2, #dadada);
  font-family: "DejaVu Sans", sans-serif;
  font-size: 14.5px;
  color: #222;
}
.tab.active { width: 72px; background: linear-gradient(#fafafa, #ededed); border-color: #f5f5f5; }
.layers { flex: 1; padding-top: 5px; }
.row { height: 36px; display: flex; align-items: center; padding-left: 27px; position: relative; }
.row.current::before {
  content: "";
  position: absolute;
  left: 7px;
  top: 4px;
  border-left: 16px solid #1830f0;
  border-top: 14px solid transparent;
  border-bottom: 14px solid transparent;
}
.swatch {
  width: 36px;
  height: 37px;
  flex: none;
  display: flex;
  align-items: center;
  justify-content: center;
  background: #fff;
  border-radius: 6px;
  box-shadow: 0 1px 2px rgba(0, 0, 0, .35);
}
.swatch i { width: 16px; height: 20px; border-top: 2px solid rgba(0, 0, 0, .28); border-bottom: 2px solid rgba(0, 0, 0, .28); }
.c-red { background: #8f1400; }
.c-green { background: #009000; }
.c-purple { background: #982090; }
.c-navy { background: #001a96; }
.c-cyan { background: #00c8c8; }
.c-teal { background: #008a8a; }
.c-olive { background: #8f8f00; }
.c-silver { background: #c4c4c4; }
.c-yellow { background: #cccc00; }
.c-magenta { background: #d030c8; }
.c-gray { background: #8f8f8f; }
.check {
  width: 28px;
  height: 28px;
  flex: none;
  margin-left: 8px;
  display: flex;
  align-items: center;
  justify-content: center;
  background: #3b99fc;
  border-radius: 6px;
}
.check::after {
  content: "";
  width: 9px;
  height: 17px;
  margin-top: -3px;
  border-right: 3px solid #fff;
  border-bottom: 3px solid #fff;
  transform: rotate(35deg);
}
.name { margin-left: 18px; font-family: "DejaVu Sans", sans-serif; font-size: 16.2px; color: #111; white-space: nowrap; }

/* message panel */
.info {
  height: 56px;
  flex: none;
  display: grid;
  grid-template-columns: 116px 106px 232px 132px 112px 1fr;
  padding: 2px 0 0 22px;
  background: #ebebeb;
  border: 2px solid #c0c0c0;
  border-right-color: #c8c8c8;
  font-size: 23.3px;
  line-height: 26px;
}
.info-item { display: flex; flex-direction: column; }
.t-green { color: #005c00; }
.t-teal { color: #00606c; }
.t-red { color: #8a0000; }
.t-blue { color: #00008f; }

/* status line */
.status {
  flex: 1;
  display: grid;
  grid-template-columns: 121px 159px 192px 170px 170px 206px 1fr;
  align-items: center;
  padding-left: 871px;
  background: #ebebeb;
  border-top: 2px solid #f8f8f8;
  border-radius: 0 0 7px 7px;
  font-size: 23.2px;
  color: #111;
  white-space: nowrap;
}
```
